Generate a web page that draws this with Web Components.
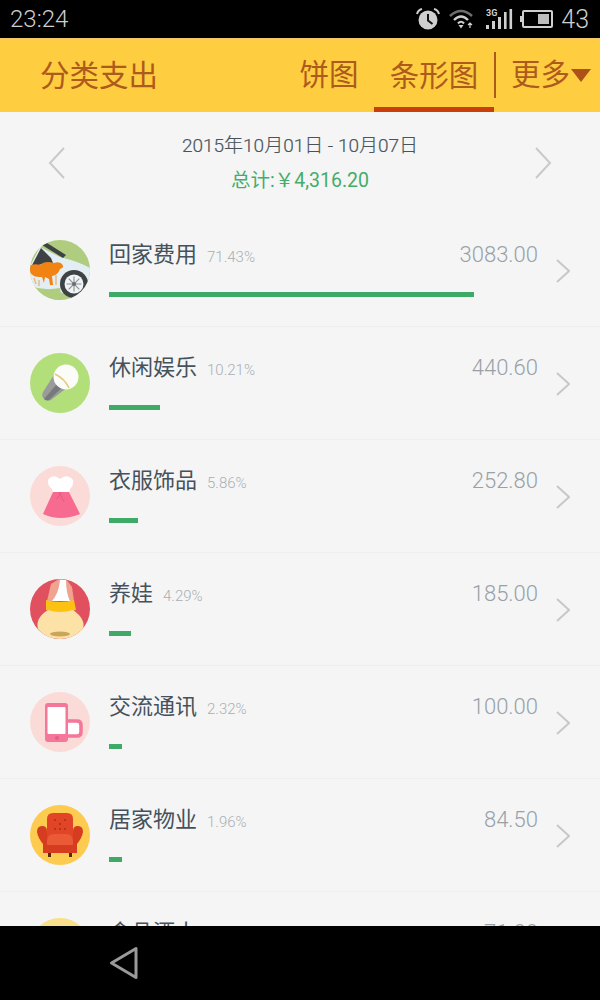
<!DOCTYPE html>
<html lang="zh"><head><meta charset="utf-8"><title>分类支出</title>
<style>
html,body{margin:0;padding:0;background:#000}
body{width:600px;height:1000px;overflow:hidden;display:flex;flex-direction:column;font-family:Roboto,"Noto Sans CJK SC",sans-serif}
</style></head><body>
<status-bar></status-bar>
<app-header></app-header>
<main-area>
  <date-range></date-range>
  <cat-row name="回家费用" pct="71.43%" amount="3083.00" bar="365">
    <svg slot="icon" viewBox="0 0 60 60" width="60" height="60"><defs><clipPath id="c1"><circle cx="30" cy="30" r="30"/></clipPath></defs><g clip-path="url(#c1)"><rect width="60" height="60" fill="#afcc7f"/><path d="M10 7 L30 17 Q50 22 60 28 L60 44 L54 56 L12 50 L0 46 L0 26 Z" fill="#e3eef4"/><path d="M0 29 L11 8 L21 18 L23 23 Q10 22 2 29 Z" fill="#3f4245"/><path d="M12 5 L17 3 L36 15 L33 18 Z" fill="#3f4245"/><path d="M-1 26 Q5 23 10 25 Q15 20 24 23 Q29 21 32 24 Q35 28 30 29 Q28 35 22 36 L23 45 L20 45 L19 39 L15 37 L14 43 L12 37 Q6 37 4 36 Q-1 34 -1 26Z" fill="#f08312"/><path d="M4 38 L6 44 M9 40 L9 46 M26 35 L26 45" stroke="#e8b98a" stroke-width="1.5"/><path d="M0 46 Q14 51 30 48 L32 60 L0 60 Z" fill="#afcc7f"/><circle cx="44" cy="44" r="14" fill="#3f4245"/><circle cx="44" cy="44" r="9.5" fill="#f1f4f5"/><path d="M44 36.5 V51.5 M36.5 44 H51.5 M38.7 38.7 L49.3 49.3 M49.3 38.7 L38.7 49.3" stroke="#8b9094" stroke-width="1.1"/><circle cx="44" cy="44" r="2" fill="#6b7074"/></g></svg>
  </cat-row>
  <cat-row name="休闲娱乐" pct="10.21%" amount="440.60" bar="51">
    <svg slot="icon" viewBox="0 0 60 60" width="60" height="60"><circle cx="30" cy="30" r="30" fill="#b3df7b"/><path d="M27 17 L42 31 L21 47 Q17 49 14 46 Q11 43 13 39 Z" fill="#9a9c9c"/><path d="M33 24 L38 29 L19 47 Q16 48 14 46 Z" fill="#77797a"/><circle cx="36" cy="24" r="12.5" fill="#fbfbf8"/><path d="M25 21 Q35 26 39 35" fill="none" stroke="#e6c878" stroke-width="1.5"/></svg>
  </cat-row>
  <cat-row name="衣服饰品" pct="5.86%" amount="252.80" bar="29">
    <svg slot="icon" viewBox="0 0 60 60" width="60" height="60"><circle cx="30" cy="30" r="30" fill="#fbdbd7"/><path d="M18 14 Q23 7 30 13 Q37 7 43 14 Q44 19 40 23 L39 28 L23 28 L22 23 Q17 19 18 14Z" fill="#fff"/><path d="M23 26 L39 26 L50 48 Q30 56 13 48 Z" fill="#f76b90"/><path d="M29 26 L34 36 M31 26 L27 33" stroke="#e55a80" stroke-width="1"/></svg>
  </cat-row>
  <cat-row name="养娃" pct="4.29%" amount="185.00" bar="22">
    <svg slot="icon" viewBox="0 0 60 60" width="60" height="60"><defs><clipPath id="c4"><circle cx="30" cy="30" r="30"/></clipPath></defs><g clip-path="url(#c4)"><rect width="60" height="60" fill="#e0505f"/><path d="M17 22 L21 5 L29 0 L36 0 L42 8 L44 22 Z" fill="#f0a48f"/><path d="M22 22 Q29 14 30 1 L36 1 Q36 14 40 22 Z" fill="#fff"/><path d="M16 21 Q30 25 44 21 L46 31 Q30 36 16 31 Z" fill="#fbc113"/><path d="M18 31 Q30 35 43 31 Q56 40 53 50 Q46 60 30 60 Q14 60 8 50 Q5 39 18 31Z" fill="#fde2a8"/><ellipse cx="30" cy="55" rx="10" ry="2.5" fill="#c9a65a"/></g></svg>
  </cat-row>
  <cat-row name="交流通讯" pct="2.32%" amount="100.00" bar="13">
    <svg slot="icon" viewBox="0 0 60 60" width="60" height="60"><circle cx="30" cy="30" r="30" fill="#fbdbd7"/><path d="M38 29 H47 Q51 29 51 33 V40 Q51 44 47 44 H38" fill="#fff" stroke="#f4779a" stroke-width="3.5"/><rect x="15" y="11" width="23" height="39" rx="3" fill="#f4779a"/><rect x="17.5" y="15" width="18" height="27" rx="1" fill="#fff"/><circle cx="27" cy="46" r="2" fill="#e85c85"/></svg>
  </cat-row>
  <cat-row name="居家物业" pct="1.96%" amount="84.50" bar="13">
    <svg slot="icon" viewBox="0 0 60 60" width="60" height="60"><circle cx="30" cy="30" r="30" fill="#fdcb4f"/><rect x="18" y="47" width="3" height="5" fill="#5a2a10"/><rect x="39" y="47" width="3" height="5" fill="#5a2a10"/><path d="M17 14 Q17 8 23 8 H37 Q43 8 43 14 V32 H17Z" fill="#e14427"/><path d="M7 27 Q7 21 12 21 Q17 21 17 26 V32 H43 V26 Q43 21 48 21 Q53 21 53 27 Q52 33 47 39 V48 H13 V39 Q8 33 7 27Z" fill="#d63c1f"/><path d="M17 36 Q17 29 24 29 H36 Q43 29 43 36 V40 H17Z" fill="#ea5a36"/><g fill="#a82c15"><circle cx="25" cy="15" r="1"/><circle cx="35" cy="15" r="1"/><circle cx="30" cy="19" r="1"/><circle cx="25" cy="24" r="1"/><circle cx="30" cy="24" r="1"/><circle cx="35" cy="24" r="1"/></g></svg>
  </cat-row>
  <cat-row name="食品酒水" amount="71.00" bar="11">
    <svg slot="icon" viewBox="0 0 60 60" width="60" height="60"><circle cx="30" cy="30" r="30" fill="#fadf8b"/></svg>
  </cat-row>
</main-area>
<nav-bar></nav-bar>
<script>
function def(tag,html){
  customElements.define(tag,class extends HTMLElement{
    constructor(){super();this.attachShadow({mode:'open'}).innerHTML=html(this)}
  });
}
def('status-bar',()=>`<style>
:host{display:flex;flex:none;align-items:center;height:38px;background:#000;color:#cfcfcf;padding:0 10px;box-sizing:border-box;font:300 24px Roboto,sans-serif}
.t{flex:1}
svg{display:block;flex:none}
.row{display:flex;align-items:center}
.n{font-size:25px;margin-left:8px;margin-right:1px}
</style>
<span class="t">23:24</span>
<div class="row">
<svg width="26" height="24" viewBox="0 0 26 24" style="margin-right:8px"><circle cx="13" cy="13" r="9.5" fill="#cfcfcf"/><path d="M13 7 V13.5 L17.5 17" fill="none" stroke="#111" stroke-width="2"/><path d="M2 7 Q3 3 7 2 M24 7 Q23 3 19 2" fill="none" stroke="#cfcfcf" stroke-width="2"/></svg>
<svg width="26" height="20" viewBox="0 0 26 20" style="margin-right:11px"><path d="M1 7 Q12 -3 23 7" fill="none" stroke="#6f6f6f" stroke-width="2.6"/><path d="M5 11 Q12 4 19 11" fill="none" stroke="#cfcfcf" stroke-width="2.4"/><path d="M9 14.5 Q12 11 15 14.5" fill="none" stroke="#cfcfcf" stroke-width="2.2"/><path d="M9.5 16 H14.5 L12 19.5Z" fill="#cfcfcf"/><path d="M21 19 V14 M19 16 L21 14 L23 16" fill="none" stroke="#cfcfcf" stroke-width="1.2"/></svg>
<svg width="27" height="22" viewBox="0 0 27 22" style="margin-right:7px"><text x="0" y="8" font-family="Roboto,sans-serif" font-size="9" font-weight="700" fill="#cfcfcf">3G</text><g fill="#cfcfcf"><rect x="0" y="17" width="3" height="4"/><rect x="6" y="13" width="3" height="8"/><rect x="12" y="9" width="3" height="12"/><rect x="18" y="4" width="2.6" height="17"/><rect x="23.5" y="1" width="2.6" height="20"/></g></svg>
<svg width="33" height="18" viewBox="0 0 33 18"><rect x="3" y="1" width="29" height="16" rx="1" fill="none" stroke="#cfcfcf" stroke-width="2"/><rect x="0" y="6" width="2" height="6" fill="#cfcfcf"/><rect x="18" y="4" width="11" height="10" fill="#bdbdbd"/></svg>
<span class="n">43</span>
</div>`);
def('app-header',()=>`<style>
:host{display:flex;flex:none;align-items:stretch;height:74px;background:#fecd40;border-top:1px solid #f3c765;box-sizing:border-box;color:#ae5a1d;font:29.5px "Noto Sans CJK SC",sans-serif;padding-left:40px;white-space:nowrap}
.title{flex:1;align-self:center;margin-top:-6px}
.tab{display:flex;align-items:center;justify-content:center;height:100%;box-sizing:border-box}
.pie{width:60px;margin-right:15px;padding-bottom:7px}
.bar{width:120px;border-bottom:5px solid #c83f0c}
.more{display:flex;align-items:center;height:46px;align-self:center;margin-top:-2px;border-left:2px solid #ae5a1d;padding:0 0 5px 15px;margin-right:9px;box-sizing:border-box}
svg{display:block;margin-left:1px;margin-top:6px}
</style>
<span class="title">分类支出</span>
<span class="tab pie">饼图</span>
<span class="tab bar">条形图</span>
<span class="more">更多<svg width="20" height="13" viewBox="0 0 20 13"><path d="M0 0H20L10 13Z" fill="#ae5116"/></svg></span>`);
def('main-area',()=>`<style>
:host{display:block;flex:1;min-height:0;overflow:hidden;background:#f5f5f5}
</style><slot></slot>`);
def('date-range',()=>`<style>
:host{display:flex;align-items:center;justify-content:space-between;height:102px;padding:0 48px;box-sizing:border-box;font-family:Roboto,"Noto Sans CJK SC",sans-serif}
.c{text-align:center;line-height:34px}
.d{font-size:19px;color:#48545c;font-weight:300;-webkit-text-stroke:.2px #48545c}
.s{font-size:19.5px;color:#44ad6a;margin-top:1px}
svg{display:block;flex:none;margin-top:-1px}
</style>
<svg width="18" height="32" viewBox="0 0 18 32"><path d="M16 1 L2 16 L16 31" fill="none" stroke="#c9c9c9" stroke-width="2"/></svg>
<div class="c"><div class="d">2015年10月01日 - 10月07日</div><div class="s">总计:￥4,316.20</div></div>
<svg width="18" height="32" viewBox="0 0 18 32"><path d="M2 1 L16 16 L2 31" fill="none" stroke="#c9c9c9" stroke-width="2"/></svg>`);
def('cat-row',el=>`<style>
:host{display:flex;height:113px;box-sizing:border-box;border-bottom:1px solid #eeeeee;padding:26px 30px 0 30px;font-family:Roboto,"Noto Sans CJK SC",sans-serif}
.ic{flex:none;width:60px;height:60px;margin-right:19px}
.b{flex:1;min-width:0;margin-top:-4px}
.top{display:flex;align-items:baseline;height:28px}
.n{font-size:22px;color:#45525c}
.p{font-size:15px;color:#a9afb3;margin-left:10px;font-weight:300}
.a{margin-left:auto;font-size:22px;font-weight:300;color:#98a1a7}
.bar{height:5px;background:#3fa968;margin-top:28px}
svg{display:block;flex:none;margin:19px 0 0 18px}
</style>
<div class="ic"><slot name="icon"></slot></div>
<div class="b"><div class="top"><span class="n">${el.getAttribute('name')}</span>${el.hasAttribute('pct')?`<span class="p">${el.getAttribute('pct')}</span>`:''}<span class="a">${el.getAttribute('amount')}</span></div><div class="bar" style="width:${el.getAttribute('bar')}px"></div></div>
<svg width="14" height="24" viewBox="0 0 14 24"><path d="M1 1 L13 12 L1 23" fill="none" stroke="#c8c8c8" stroke-width="2"/></svg>`);
def('nav-bar',()=>`<style>
:host{display:flex;flex:none;align-items:center;height:74px;background:#000;padding-left:108px;box-sizing:border-box}
svg{display:block}
</style>
<svg width="32" height="36" viewBox="0 0 32 36"><path d="M3.5 18 L28 3.5 V32.5Z" fill="none" stroke="#9a9a9a" stroke-width="3" stroke-linejoin="round"/></svg>`);
</script>
</body></html>
